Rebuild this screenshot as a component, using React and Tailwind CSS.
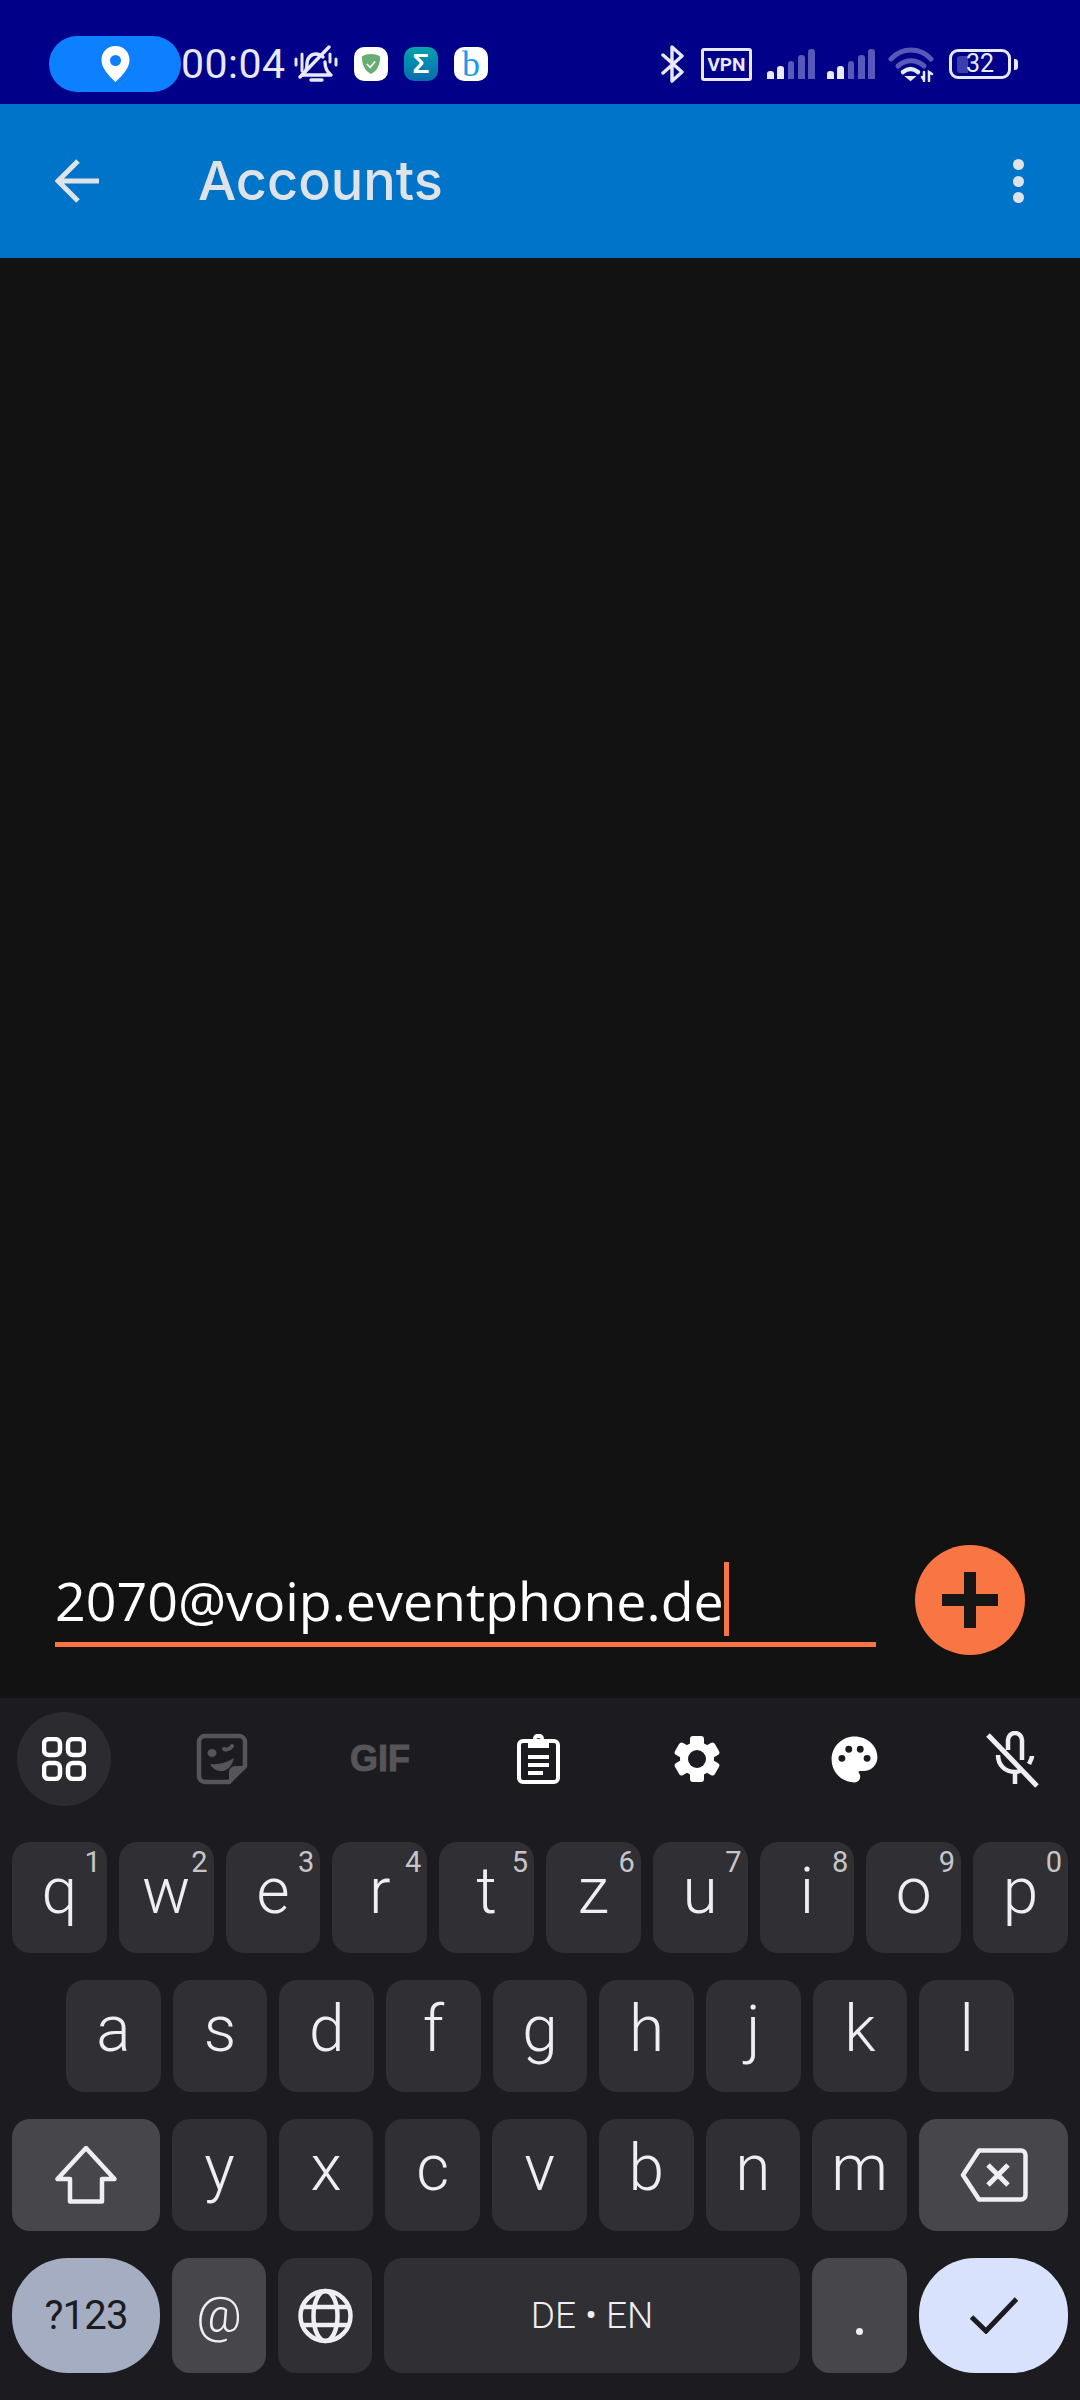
const font = "font-['Roboto',sans-serif]";

function Pin() {
  return (
    <svg width="29" height="36" viewBox="0 0 29 36">
      <path fillRule="evenodd" fill="#fff" d="M14.500 0C6.500 0 .5 6 .5 14c0 8 7 15.500 14 22 7-6.500 14-14 14-22 0-8-6-14-14-14zm0 9a5.500 5.500 0 1 1 0 11 5.500 5.500 0 0 1 0-11z" />
    </svg>
  );
}

function MuteBell() {
  return (
    <svg width="44" height="38" viewBox="0 0 44 38" fill="none" stroke="#e8e8fb" strokeWidth="3.400" strokeLinecap="round" strokeLinejoin="round">
      <path d="M8 30c3-2 5-5 5-11 0-6 4-10 9-10 3 0 5 1 7 3M31 17c0 6 2 10 6 13H9" />
      <path d="M6 32 35 2" />
      <path d="M17 35h11" />
      <path d="M2 14v6M8 9v17M36 9v8M42 14v6" strokeWidth="3" />
    </svg>
  );
}

function AppIcons() {
  return (
    <div className="ml-4 flex gap-4">
      <div className="flex h-[34px] w-[34px] items-center justify-center rounded-[10px] bg-white">
        <svg width="20" height="22" viewBox="0 0 24 26">
          <path fill="#68ad72" d="M12 1c4 0 8 1 11 3 0 9-3 17-11 21C4 21 1 13 1 4c3-2 7-3 11-3z" />
          <path d="m7 13 4 4 6-7" fill="none" stroke="#fff" strokeWidth="2" />
        </svg>
      </div>
      <div className="flex h-[34px] w-[34px] items-center justify-center rounded-[10px] bg-gradient-to-b from-[#0aa3ac] to-[#0a6cae] font-['Liberation_Sans',sans-serif] text-[28px] font-bold leading-none text-white">
        Σ
      </div>
      <div className="flex h-[34px] w-[34px] items-center justify-center rounded-[10px] bg-white font-['Liberation_Serif',serif] text-[36px] leading-none text-[#1e9be8]">
        b
      </div>
    </div>
  );
}

function Signal() {
  const bars = [
    { h: 8, c: "bg-[#e8e8fb]" },
    { h: 13, c: "bg-[#e8e8fb]" },
    { h: 18, c: "bg-[#5858b8]" },
    { h: 24, c: "bg-[#5858b8]" },
    { h: 30, c: "bg-[#5858b8]" },
  ];
  return (
    <div className="flex h-[30px] w-12 items-end gap-[3.500px]">
      {bars.map((b, i) => (
        <div key={i} className={`w-[6.800px] rounded-t-[3px] ${b.c}`} style={{ height: b.h }} />
      ))}
    </div>
  );
}

function StatusBar() {
  return (
    <div className={`flex h-[104px] items-center bg-[#000088] pl-[49px] pr-[62px] pt-6 ${font} text-[#e8e8fb]`}>
      <div className="flex h-[56px] w-[132px] items-center justify-center rounded-full bg-[#0d80ff]">
        <Pin />
      </div>
      <span className="w-[113px] text-[41px] leading-none tracking-[0.5px]">00:04</span>
      <MuteBell />
      <AppIcons />
      <div className="ml-auto flex items-center">
        <svg width="24" height="38" viewBox="0 0 24 38" fill="none" stroke="#e8e8fb" strokeWidth="3.400" strokeLinecap="round" strokeLinejoin="round">
          <path d="M2 10 21 27 11 36V2l10 9L2 28" />
        </svg>
        <div className="ml-4 flex h-[33px] w-[51px] items-center justify-center rounded-[3px] border-[3px] border-[#e8e8fb] text-[19px] font-bold leading-none">
          VPN
        </div>
        <div className="ml-[15px] flex gap-3">
          <Signal />
          <Signal />
        </div>
        <svg className="ml-[13px]" width="46" height="35" viewBox="0 0 46 35" fill="none" strokeLinecap="round">
          <path d="M3 12C14 0 32 0 43 12" stroke="#5858b8" strokeWidth="5" />
          <path d="M10 19c8-7 18-7 26 0" stroke="#5858b8" strokeWidth="5" />
          <path d="M15 25c5-4 10-4 15 0" stroke="#e8e8fb" strokeWidth="4.500" />
          <path d="M19 30h7l-3.500 3z" fill="#e8e8fb" stroke="#e8e8fb" strokeWidth="2" />
          <path d="M36 25v9M34 30l2 3M41 34V25l3 2" stroke="#e8e8fb" strokeWidth="2.500" />
        </svg>
        <div className="relative ml-[15px] flex h-[30px] w-[62px] items-center rounded-[9px] border-[3px] border-[#e8e8fb] px-[5px]">
          <div className="h-[17px] w-[11px] rounded-l-[3px] bg-[#3d3dae]" />
          <span className="absolute inset-0 text-center text-[25px] leading-[24px]">32</span>
        </div>
        <div className="ml-[3px] h-[11px] w-[4px] rounded-r-[3px] bg-[#e8e8fb]" />
      </div>
    </div>
  );
}

function AppBar() {
  return (
    <div className="flex h-[154px] items-center bg-[#0074c8] pl-[55px] pr-[56px] text-[#dfe3e8]">
      <svg width="44" height="44" viewBox="0 0 44 44" fill="none" stroke="currentColor" strokeWidth="5">
        <path d="M44 22H4M23 2 3 22l20 20" />
      </svg>
      <span className="ml-[99px] font-['Inter',sans-serif] text-[54px] font-[450] leading-none">Accounts</span>
      <div className="ml-auto flex flex-col gap-[5.500px]">
        <div className="h-[11px] w-[11px] rounded-full bg-current" />
        <div className="h-[11px] w-[11px] rounded-full bg-current" />
        <div className="h-[11px] w-[11px] rounded-full bg-current" />
      </div>
    </div>
  );
}

function InputRow() {
  return (
    <div className="flex h-[120px] items-start justify-between px-[55px]">
      <div className="mt-[17px] h-[85px] w-[821px] border-b-[5px] border-[#f97644]">
        <div className="flex h-[74px] items-center">
          <span className="pt-[3px] font-['Open_Sans',sans-serif] text-[53.750px] leading-none text-white">2070@voip.eventphone.de</span>
          <span className="h-[74px] w-[5px] bg-[#f97644]" />
        </div>
      </div>
      <div className="flex h-[110px] w-[110px] items-center justify-center rounded-full bg-[#f97644]">
        <svg width="56" height="56" viewBox="0 0 56 56" fill="#161616">
          <path d="M22 0h12v22h22v12H34v22H22V34H0V22h22z" />
        </svg>
      </div>
    </div>
  );
}

function Toolbar() {
  return (
    <div className="flex h-[144px] items-start pl-[17px] pt-[14px]">
      <div className="flex h-[94px] w-[94px] shrink-0 items-center justify-center rounded-full bg-[#2b2b30]">
        <svg width="44" height="44" viewBox="0 0 44 44" fill="none" stroke="#fff" strokeWidth="4.500">
          <rect x="2" y="2" width="16" height="16" rx="5" />
          <rect x="26" y="2" width="16" height="16" rx="5" />
          <rect x="2" y="26" width="16" height="16" rx="5" />
          <rect x="26" y="26" width="16" height="16" rx="5" />
        </svg>
      </div>
      <div className="ml-[81px] flex h-[94px] items-center gap-[98px]">
        <div className="flex w-[60px] justify-center">
          <svg width="52" height="52" viewBox="0 0 52 52" fill="none" stroke="#55555a" strokeWidth="4.500">
            <path d="M9 3h34a6 6 0 0 1 6 6v24L33 49H9a6 6 0 0 1-6-6V9a6 6 0 0 1 6-6z" />
            <path d="M49 33H39a6 6 0 0 0-6 6v10z" fill="#55555a" stroke="none" />
            <path d="M14 31c8 1 16-1 24-6-2 9-8 14-14 13-4 0-8-3-10-7z" fill="#55555a" stroke="none" />
            <ellipse cx="16" cy="20" rx="4.500" ry="4" fill="#55555a" stroke="none" />
            <path d="M28 16c3 1 6 0 8-3" strokeWidth="4" strokeLinecap="round" />
          </svg>
        </div>
        <div className="flex w-[60px] justify-center">
          <span className="font-['Liberation_Sans',sans-serif] text-[36px] font-bold leading-none text-[#55555a] [-webkit-text-stroke:1px_#55555a]">GIF</span>
        </div>
        <div className="flex w-[60px] justify-center">
          <svg width="43" height="50" viewBox="0 0 43 50">
            <rect x="2" y="7" width="39" height="41" rx="4" fill="none" stroke="#fff" strokeWidth="4" />
            <path fillRule="evenodd" fill="#fff" d="M11 5h5a5.500 5.500 0 0 1 11 0h5v9H11zM21.500 4a2.500 2.500 0 1 0 0 5 2.500 2.500 0 0 0 0-5z" />
            <path fill="#fff" d="M11 21h21v4H11zM11 29h21v4H11zM11 37h15v4H11z" />
          </svg>
        </div>
        <div className="flex w-[60px] justify-center">
          <svg className="ml-[1px]" width="46" height="48" viewBox="0 0 46 48">
            <g fill="#fff">
              <circle cx="23" cy="24" r="17" />
              <rect x="16" y="1" width="14" height="46" rx="3" />
              <rect x="16" y="1" width="14" height="46" rx="3" transform="rotate(60 23 24)" />
              <rect x="16" y="1" width="14" height="46" rx="3" transform="rotate(120 23 24)" />
            </g>
            <circle cx="23" cy="24" r="9" fill="#1b1b20" />
          </svg>
        </div>
        <div className="flex w-[60px] justify-center">
          <svg width="55" height="55" viewBox="0 0 24 24" fill="#fff">
            <path d="M12 2C6.490 2 2 6.490 2 12s4.490 10 10 10a2.500 2.500 0 0 0 2.500-2.500c0-.61-.23-1.200-.64-1.670a.528.528 0 0 1 .4-.83H16c3.310 0 6-2.690 6-6 0-4.960-4.490-9-10-9zM6.500 13a1.500 1.500 0 1 1 0-3 1.500 1.500 0 0 1 0 3zm3-4a1.500 1.500 0 1 1 0-3 1.500 1.500 0 0 1 0 3zm5 0a1.500 1.500 0 1 1 0-3 1.500 1.500 0 0 1 0 3zm3 4a1.500 1.500 0 1 1 0-3 1.500 1.500 0 0 1 0 3z" />
          </svg>
        </div>
        <div className="flex w-[60px] justify-center">
          <svg width="54" height="57" viewBox="0 0 54 57" fill="none" stroke="#eeeef3" strokeWidth="4.500">
            <path d="M3 4l49 51" strokeWidth="5" />
            <path d="M23 19V9a7 7 0 0 1 14 0v20" />
            <path d="M13 24c0 10 7 17 17 17 3 0 5-1 7-2M47 25c0 3-2 6-3 8M30 41v12" />
          </svg>
        </div>
      </div>
    </div>
  );
}

function LetterKey({ label, hint }) {
  return (
    <div className={`relative flex flex-1 justify-center rounded-[18px] bg-[#2f2f34] text-[64px] font-[350] leading-none text-[#eeeef3] ${font}`}>
      <span className="mt-[18px]">{label}</span>
      {hint && <span className="absolute right-[6px] top-[6px] text-[29px] font-normal leading-none text-[#c6c6ca]">{hint}</span>}
    </div>
  );
}

function Keyboard() {
  const top = ["q", "w", "e", "r", "t", "z", "u", "i", "o", "p"];
  const hints = ["1", "2", "3", "4", "5", "6", "7", "8", "9", "0"];
  const mid = ["a", "s", "d", "f", "g", "h", "j", "k", "l"];
  const low = ["y", "x", "c", "v", "b", "n", "m"];
  return (
    <div className={`flex flex-col gap-[27px] px-3 ${font}`}>
      <div className="flex h-[111px] gap-3">
        {top.map((k, i) => (
          <LetterKey key={k} label={k} hint={hints[i]} />
        ))}
      </div>
      <div className="flex h-[112px] gap-3 px-[54px]">
        {mid.map((k) => (
          <LetterKey key={k} label={k} />
        ))}
      </div>
      <div className="flex h-[112px] gap-3">
        <div className="flex w-[148px] items-center justify-center rounded-[18px] bg-[#46464b]">
          <svg width="62" height="58" viewBox="0 0 62 58" fill="none" stroke="#eeeef3" strokeWidth="4.500" strokeLinejoin="round">
            <path d="M31 2 2.500 33H15v22.500h32V33h12.500z" />
          </svg>
        </div>
        {low.map((k) => (
          <LetterKey key={k} label={k} />
        ))}
        <div className="flex w-[149px] items-center justify-center rounded-[18px] bg-[#46464b]">
          <svg width="68" height="54" viewBox="0 0 68 54" fill="none" stroke="#eeeef3" strokeWidth="4.500" strokeLinejoin="round">
            <path d="M3 27 19 2.500h42a4.500 4.500 0 0 1 4.500 4.500v40a4.500 4.500 0 0 1-4.500 4.500H19z" />
            <path d="M28 17l20 20M48 17 28 37" strokeWidth="5" />
          </svg>
        </div>
      </div>
      <div className="flex h-[115px] gap-3">
        <div className="flex w-[148px] items-center justify-center rounded-[56px] bg-[#a4adc2] text-[40px] tracking-[-0.8px] text-[#1b1b20]">?123</div>
        <div className="flex w-[94px] items-center justify-center rounded-[18px] bg-[#46464b] text-[50px] font-[350] text-[#eeeef3]">@</div>
        <div className="flex w-[94px] items-center justify-center rounded-[18px] bg-[#2f2f34]">
          <svg width="55" height="56" viewBox="0 0 55 56" fill="none" stroke="#eeeef3" strokeWidth="4.500">
            <circle cx="27.500" cy="28" r="25" />
            <ellipse cx="27.500" cy="28" rx="12" ry="25" />
            <path d="M5 19h45M5 37h45" />
          </svg>
        </div>
        <div className="flex flex-1 items-center justify-center rounded-[18px] bg-[#2f2f34] text-[37px] font-[350] text-[#eeeef3]">DE • EN</div>
        <div className="flex w-[95px] justify-center rounded-[18px] bg-[#46464b] pt-[70px]">
          <div className="h-[7px] w-[7px] rounded-full bg-[#eeeef3]" />
        </div>
        <div className="flex w-[149px] items-center justify-center rounded-[56px] bg-[#d9e2fc]">
          <svg width="48" height="37" viewBox="0 0 48 37" fill="none" stroke="#1b1b20" strokeWidth="5">
            <path d="M1.500 20 16 34 46.500 2" />
          </svg>
        </div>
      </div>
    </div>
  );
}

export default function App() {
  return (
    <div className="flex h-[2400px] w-[1080px] flex-col bg-[#121212]">
      <StatusBar />
      <AppBar />
      <div className="flex flex-1 flex-col justify-end pb-[33px]">
        <InputRow />
      </div>
      <div className="h-[702px] bg-[#1b1b20]">
        <Toolbar />
        <Keyboard />
      </div>
    </div>
  );
}
